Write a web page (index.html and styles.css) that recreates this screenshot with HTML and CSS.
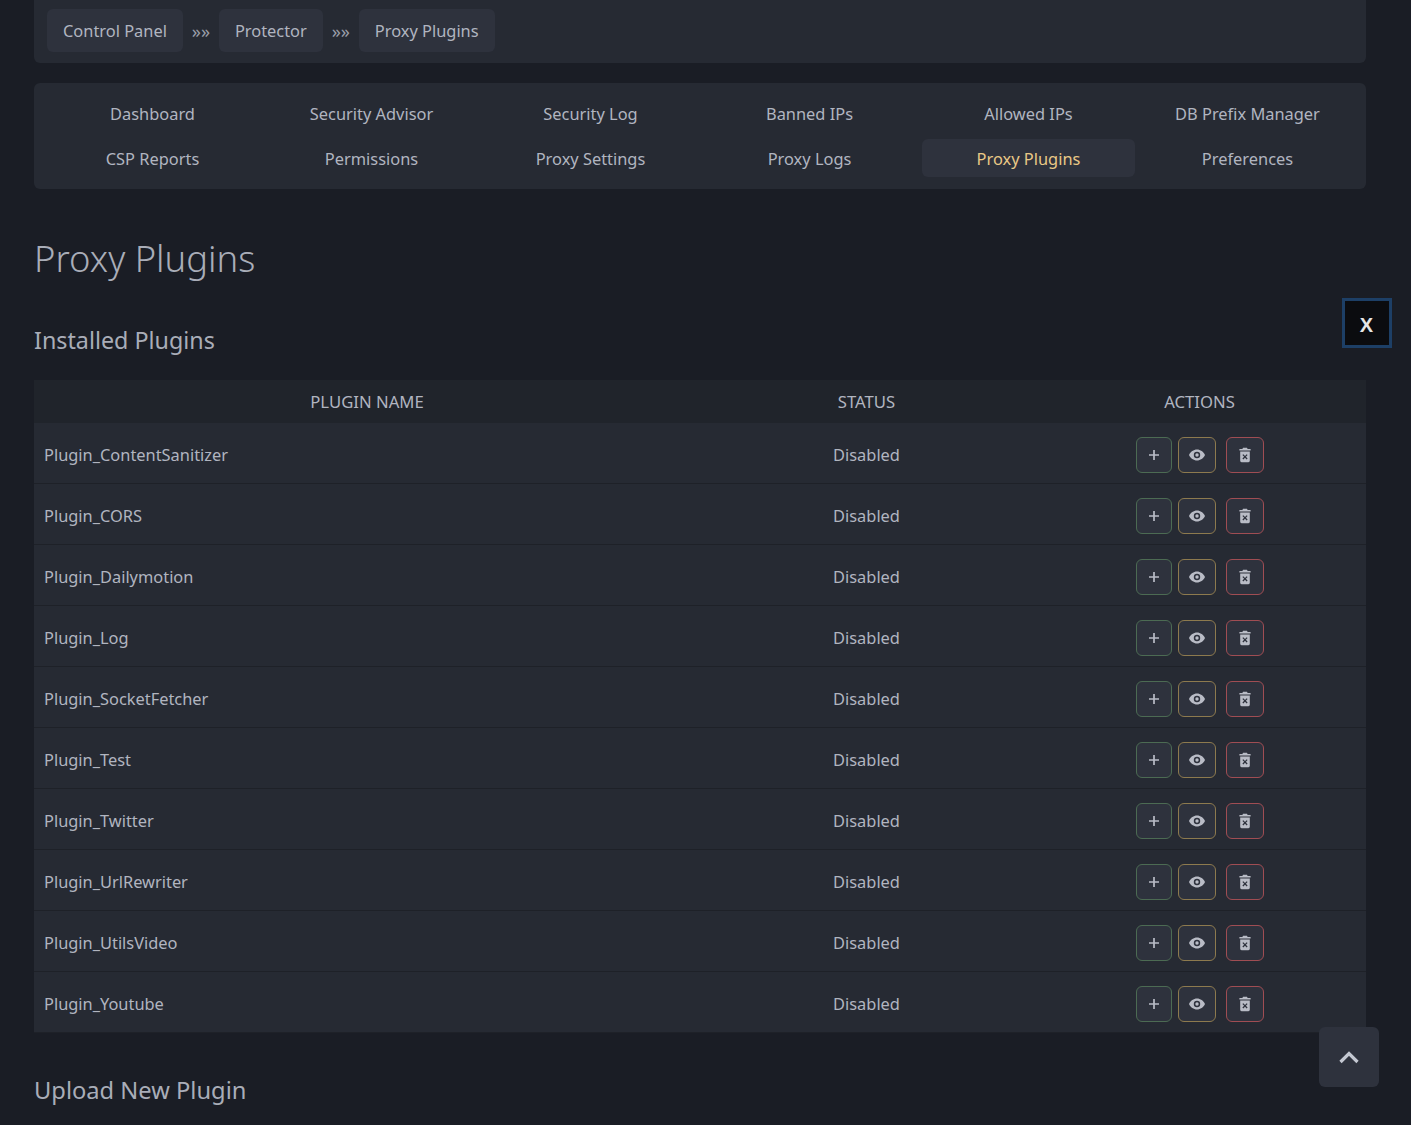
FILE: index.html
```html
<!DOCTYPE html>
<html lang="en">
<head>
    <meta charset="UTF-8">
    <title>Proxy Plugins</title>
    <link rel="stylesheet" href="styles.css">
</head>
<body>

<svg class="sprite" aria-hidden="true">
    <symbol id="icon-plus" viewBox="0 0 16 16">
        <path d="M8 3v10M3 8h10" fill="none" stroke="currentColor" stroke-width="1.7"/>
    </symbol>
    <symbol id="icon-eye" viewBox="0 0 16 16">
        <path fill-rule="evenodd" fill="currentColor" d="M8 2.5C4.600 2.500 1.500 4.800 0 8c1.500 3.200 4.600 5.500 8 5.500s6.500-2.300 8-5.500C14.500 4.800 11.400 2.500 8 2.500zM8 4.800a3.200 3.200 0 1 1 0 6.400 3.200 3.200 0 0 1 0-6.400z"/>
        <circle cx="8" cy="8" r="1.700" fill="currentColor"/>
    </symbol>
    <symbol id="icon-trash" viewBox="0 0 16 16">
        <path fill-rule="evenodd" fill="currentColor" d="M6 .8h4l.6 1.200h3v1.600H2.400V2h3zM3.200 4.600h9.600v9.200c0 .9-.6 1.400-1.400 1.400H4.600c-.8 0-1.400-.5-1.400-1.400zM6.300 7.200l-.9.900L7.100 9.800l-1.700 1.700.9.900L8 10.700l1.700 1.700.9-.9-1.700-1.700 1.700-1.700-.9-.9L8 8.900z"/>
    </symbol>
    <symbol id="icon-up" viewBox="0 0 24 24">
        <path d="M3.500 17L12 8.500 20.500 17" fill="none" stroke="currentColor" stroke-width="3.200"/>
    </symbol>
</svg>

<div class="page">
    <main class="container">
        <nav class="breadcrumb">
            <a class="crumb">Control Panel</a>
            <span class="crumb-sep">»»</span>
            <a class="crumb">Protector</a>
            <span class="crumb-sep">»»</span>
            <a class="crumb">Proxy Plugins</a>
        </nav>

        <nav class="menu">
            <a class="menu-item">Dashboard</a>
            <a class="menu-item">Security Advisor</a>
            <a class="menu-item">Security Log</a>
            <a class="menu-item">Banned IPs</a>
            <a class="menu-item">Allowed IPs</a>
            <a class="menu-item">DB Prefix Manager</a>
            <a class="menu-item">CSP Reports</a>
            <a class="menu-item">Permissions</a>
            <a class="menu-item">Proxy Settings</a>
            <a class="menu-item">Proxy Logs</a>
            <a class="menu-item active">Proxy Plugins</a>
            <a class="menu-item">Preferences</a>
        </nav>

        <h1 class="page-title">Proxy Plugins</h1>

        <h2 class="section-title">Installed Plugins</h2>

        <table class="plugins">
            <thead>
                <tr>
                    <th class="col-name">PLUGIN NAME</th>
                    <th class="col-status">STATUS</th>
                    <th class="col-actions">ACTIONS</th>
                </tr>
            </thead>
            <tbody id="plugin-rows"></tbody>
        </table>

        <h2 class="section-title upload-title">Upload New Plugin</h2>
    </main>
</div>

<button class="close-box">X</button>
<button class="back-top"><svg class="icon-up"><use href="#icon-up"/></svg></button>

<template id="row-template">
    <tr>
        <td class="plugin-name"></td>
        <td class="plugin-status">Disabled</td>
        <td>
            <div class="plugin-actions">
                <button class="btn btn-install"><svg class="icon"><use href="#icon-plus"/></svg></button>
                <button class="btn btn-view"><svg class="icon"><use href="#icon-eye"/></svg></button>
                <button class="btn btn-delete"><svg class="icon"><use href="#icon-trash"/></svg></button>
            </div>
        </td>
    </tr>
</template>

<script src="script.js"></script>
</body>
</html>
```

FILE: styles.css
```css
* {
    box-sizing: border-box;
}

html, body {
    margin: 0;
    height: 100%;
    overflow: hidden;
}

body {
    background-color: #1a1d25;
    color: #b1b5c0;
    font-family: "Noto Sans", "Open Sans", sans-serif;
    font-size: 16.4px;
}

.sprite {
    display: none;
}

.page {
    height: 100vh;
    overflow-y: scroll;
}

.page::-webkit-scrollbar {
    width: 11px;
}

.page::-webkit-scrollbar-track {
    background-color: #24272f;
}

.page::-webkit-scrollbar-thumb {
    background-color: #32353e;
}

.page::-webkit-scrollbar-button:single-button:vertical:increment {
    height: 14px;
    background-color: #24272f;
    background-image: conic-gradient(from -40deg at 50% 100%, #5a5d66 80deg, transparent 0);
    background-size: 9px 5px;
    background-position: center;
    background-repeat: no-repeat;
}

.container {
    min-height: 3890px;
    padding: 0 34px;
    width: 1400px;
}

.breadcrumb {
    display: flex;
    align-items: center;
    height: 63px;
    padding: 0 13px 2px;
    background-color: #262a33;
    border-radius: 0 0 6px 6px;
}

.crumb {
    padding: 0 16px;
    height: 43px;
    line-height: 43px;
    background-color: #2e323d;
    border-radius: 6px;
}

.crumb-sep {
    width: 36px;
    text-align: center;
    font-size: 18px;
    color: #9a9ea9;
}

.menu {
    display: grid;
    grid-template-columns: repeat(6, 1fr);
    gap: 7px 6px;
    margin-top: 20px;
    padding: 11px 12px 12px;
    background-color: #262a33;
    border-radius: 6px;
}

.menu-item {
    height: 38px;
    line-height: 40px;
    text-align: center;
    border-radius: 6px;
}

.menu-item.active {
    background-color: #2e323d;
    color: #e9c886;
}

.page-title {
    margin: 41px 0 0;
    font-size: 36.4px;
    font-weight: 300;
    line-height: 56px;
    color: #a9adb8;
}

.section-title {
    margin: 36px 0 0;
    font-size: 23.3px;
    font-weight: 400;
    line-height: 36px;
    color: #a9adb8;
}

.upload-title {
    margin-top: 39px;
    font-size: 23.7px;
}

.plugins {
    width: 100%;
    margin-top: 22px;
    border-collapse: separate;
    border-spacing: 0;
    table-layout: fixed;
}

.plugins th {
    height: 43px;
    font-size: 16.7px;
    font-weight: 400;
    text-align: center;
    background-color: #20242b;
}

.col-name {
    width: 50%;
}

.plugins td {
    height: 61px;
    padding-top: 4px;
    background-color: #262a33;
    border-bottom: 1px solid #1e2128;
}

.plugin-name {
    padding-left: 10px;
}

.plugin-status {
    text-align: center;
}

.plugin-actions {
    display: flex;
    justify-content: center;
}

.btn {
    display: flex;
    align-items: center;
    justify-content: center;
    width: 38px;
    height: 36px;
    padding: 0;
    color: #b9bcc6;
    background-color: #2e323d;
    border: 1px solid;
    border-radius: 6px;
}

.btn-install {
    width: 36px;
    border-color: #4c6b53;
}

.btn-view {
    border-color: #8d7a4e;
    margin-left: 6px;
}

.btn-delete {
    border-color: #a04d53;
    margin-left: 10px;
}

.icon {
    width: 16px;
    height: 16px;
}

.close-box {
    position: fixed;
    top: 298px;
    left: 1342px;
    width: 50px;
    height: 50px;
    padding: 5px 1px 0 0;
    font-family: "Liberation Sans", sans-serif;
    font-size: 20px;
    font-weight: 700;
    color: #e6e6e6;
    background-color: #0b0c0f;
    border: 3px solid #1d3f66;
}

.back-top {
    position: fixed;
    top: 1027px;
    left: 1319px;
    width: 60px;
    height: 60px;
    padding: 0;
    color: #c4c8d2;
    background-color: #2e323d;
    border: none;
    border-radius: 6px;
}

.icon-up {
    width: 24px;
    height: 24px;
    vertical-align: middle;
}
```

FILE: script.js
```js
const plugins = [
    "Plugin_ContentSanitizer",
    "Plugin_CORS",
    "Plugin_Dailymotion",
    "Plugin_Log",
    "Plugin_SocketFetcher",
    "Plugin_Test",
    "Plugin_Twitter",
    "Plugin_UrlRewriter",
    "Plugin_UtilsVideo",
    "Plugin_Youtube"
];

const rows = document.getElementById("plugin-rows");
const template = document.getElementById("row-template");

for (const name of plugins) {
    const row = template.content.cloneNode(true);
    row.querySelector(".plugin-name").textContent = name;
    rows.appendChild(row);
}
```
